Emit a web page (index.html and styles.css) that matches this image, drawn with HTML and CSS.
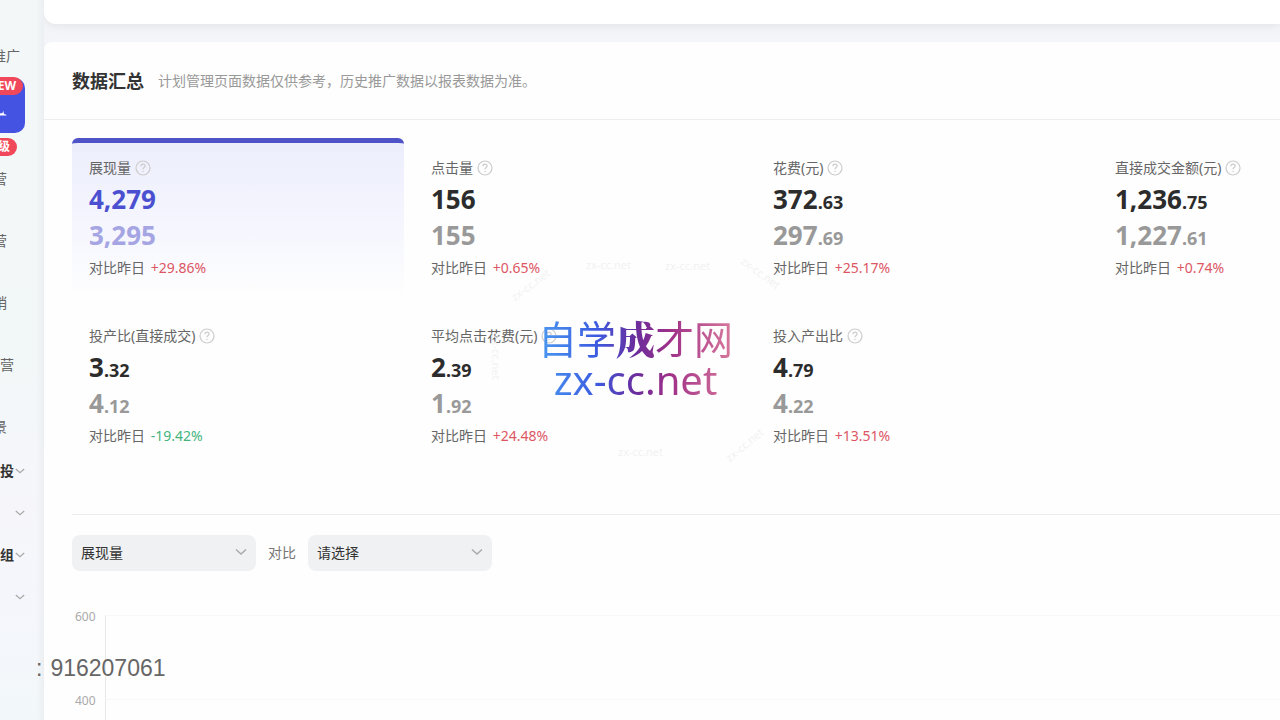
FILE: index.html
```html
<!DOCTYPE html>
<html lang="zh-CN">
<head>
<meta charset="utf-8">
<meta name="viewport" content="width=device-width, initial-scale=1">
<title>数据汇总</title>
<link rel="stylesheet" href="styles.css">
</head>
<body>
<svg class="defs" aria-hidden="true">
  <symbol id="help" viewBox="0 0 16 16"><circle cx="8" cy="8" r="7" fill="none" stroke="currentColor" stroke-width="1.2"/><path d="M5.9 6.3c0-1.3.9-2.1 2.1-2.1s2.1.8 2.1 1.9c0 1.5-2.1 1.5-2.1 3.2M8 10.7v1.2" fill="none" stroke="currentColor" stroke-width="1.2"/></symbol>
  <symbol id="chevron" viewBox="0 0 12 8"><path d="M1 1.5l5 4.5 5-4.5" fill="none" stroke="currentColor" stroke-width="1.5"/></symbol>
</svg>
<div class="app">
  <nav class="sidebar">
    <a class="item wide" href="#">推广</a>
    <a class="active" href="#" aria-label="推广"><svg class="mark" viewBox="0 0 10 8"><path d="M0 3h3l1-3 1 4 3 1v1H0z" fill="#fff"/></svg><span class="badge new">NEW</span><span class="badge up">升级</span></a>
    <div class="links">
      <a class="item" href="#">运营</a>
      <a class="item" href="#">运营</a>
      <a class="item" href="#">营销</a>
      <a class="item mid" href="#">运营</a>
      <a class="item" href="#">场景</a>
    </div>
    <div class="groups">
      <button class="group" type="button">投<svg class="chev"><use href="#chevron"/></svg></button>
      <button class="group" type="button" aria-label="展开"><svg class="chev"><use href="#chevron"/></svg></button>
      <button class="group" type="button">组<svg class="chev"><use href="#chevron"/></svg></button>
      <button class="group" type="button" aria-label="展开"><svg class="chev"><use href="#chevron"/></svg></button>
    </div>
  </nav>
  <main class="main">
    <section class="panel-top"></section>
    <section class="panel">
      <header class="head"><h1>数据汇总</h1><p>计划管理页面数据仅供参考，历史推广数据以报表数据为准。</p></header>
      <div class="metrics">
        <article class="metric selected"><h2>展现量<svg class="help"><use href="#help"/></svg></h2><p class="now">4,279</p><p class="prev">3,295</p><p class="diff">对比昨日 <span class="rise">+29.86%</span></p></article>
        <article class="metric"><h2>点击量<svg class="help"><use href="#help"/></svg></h2><p class="now">156</p><p class="prev">155</p><p class="diff">对比昨日 <span class="rise">+0.65%</span></p></article>
        <article class="metric"><h2>花费(元)<svg class="help"><use href="#help"/></svg></h2><p class="now">372<small>.63</small></p><p class="prev">297<small>.69</small></p><p class="diff">对比昨日 <span class="rise">+25.17%</span></p></article>
        <article class="metric"><h2>直接成交金额(元)<svg class="help"><use href="#help"/></svg></h2><p class="now">1,236<small>.75</small></p><p class="prev">1,227<small>.61</small></p><p class="diff">对比昨日 <span class="rise">+0.74%</span></p></article>
        <article class="metric"><h2>投产比(直接成交)<svg class="help"><use href="#help"/></svg></h2><p class="now">3<small>.32</small></p><p class="prev">4<small>.12</small></p><p class="diff">对比昨日 <span class="fall">-19.42%</span></p></article>
        <article class="metric"><h2>平均点击花费(元)<svg class="help"><use href="#help"/></svg></h2><p class="now">2<small>.39</small></p><p class="prev">1<small>.92</small></p><p class="diff">对比昨日 <span class="rise">+24.48%</span></p></article>
        <article class="metric"><h2>投入产出比<svg class="help"><use href="#help"/></svg></h2><p class="now">4<small>.79</small></p><p class="prev">4<small>.22</small></p><p class="diff">对比昨日 <span class="rise">+13.51%</span></p></article>
      </div>
      <div class="trend">
        <form class="filters">
          <span class="field"><select id="metric" aria-label="指标"><option>展现量</option></select><svg class="chev"><use href="#chevron"/></svg></span>
          <label for="compare">对比</label>
          <span class="field"><select id="compare"><option>请选择</option></select><svg class="chev"><use href="#chevron"/></svg></span>
        </form>
        <div class="chart">
          <div class="band"><span>600</span><i></i></div>
          <div class="band"><span>400</span><i></i></div>
        </div>
      </div>
    </section>
  </main>
</div>
<div class="brand"><div class="brand-name">自学<b>成</b>才网</div><div>zx-cc.net</div></div>
<div class="ghosts" aria-hidden="true">
  <span class="g1">zx-cc.net</span><span class="g2">zx-cc.net</span><span class="g3">zx-cc.net</span><span class="g4">zx-cc.net</span><span class="g5">zx-cc.net</span><span class="g6">zx-cc.net</span><span class="g7">zx-cc.net</span>
</div>
<div class="contact"><span>:</span><span>916207061</span></div>
</body>
</html>
```
FILE: styles.css
```css
* { box-sizing: border-box; }
body {
  margin: 0;
  height: 100vh;
  overflow: hidden;
  background: #f3f5f8;
  color: #333;
  font: 14px/20px "Noto Sans", "Noto Sans CJK SC", sans-serif;
}
h1, h2, p { margin: 0; }
a { color: inherit; text-decoration: none; }
.defs { position: absolute; width: 0; height: 0; }
.app { display: flex; height: 100vh; overflow: hidden; }

.sidebar {
  flex: 0 0 44px;
  overflow: hidden;
  padding-top: 46px;
  background: linear-gradient(90deg, transparent 36px, #eceff2), linear-gradient(#f3f7f8, #f2f7f8 50%, #f6f6fa 70%, #f5f6fb 82%, #f2f8fa);
}
.item {
  display: flex;
  justify-content: flex-end;
  height: 20px;
  padding-right: 37px;
  color: #666;
  white-space: nowrap;
}
.item.wide { padding-right: 24px; }
.item.mid { padding-right: 30px; }
.active {
  position: relative;
  display: flex;
  align-items: center;
  width: 25px;
  height: 55px;
  margin-top: 12px;
  padding-top: 16px;
  border-radius: 0 10px 10px 0;
  background: #4553e3;
}
.mark { width: 8px; height: 8px; }
.badge {
  position: absolute;
  height: 18px;
  padding: 0 7px;
  border-radius: 9px;
  background: #f0485a;
  color: #fff;
  font-size: 12px;
  font-weight: 700;
  line-height: 18px;
  white-space: nowrap;
}
.badge.new { top: -1px; right: 2px; }
.badge.up { top: 60px; right: 8px; }
.links {
  display: grid;
  grid-template-columns: minmax(0, 1fr);
  gap: 42px;
  padding-top: 36px;
}
.groups {
  display: grid;
  grid-template-columns: minmax(0, 1fr);
  gap: 22px;
  padding-top: 24px;
}
.group {
  display: flex;
  justify-content: flex-end;
  align-items: center;
  gap: 1px;
  height: 20px;
  padding: 0 19px 0 0;
  border: 0;
  background: none;
  color: #333;
  font: inherit;
  font-weight: 700;
}
.chev { flex: none; width: 12px; height: 8px; color: #aaa; }
.group .chev { width: 10px; }

.main { flex: 1; min-width: 0; overflow: hidden; }
.panel-top {
  height: 24px;
  border-bottom-left-radius: 12px;
  background: #fff;
  box-shadow: 0 2px 8px #e2e5e8;
}
.panel {
  margin-top: 18px;
  border-top-left-radius: 8px;
  background: #fefefe;
}
.head {
  display: flex;
  align-items: center;
  gap: 14px;
  height: 78px;
  padding: 0 28px;
  border-bottom: 1px solid #eee;
}
.head h1 { font-size: 18px; line-height: 28px; }
.head p { color: #999; }
.metrics {
  display: grid;
  grid-template-columns: repeat(4, minmax(332px, 1fr));
  gap: 10px;
  padding: 18px 0 50px 28px;
}
.metric {
  height: 158px;
  padding: 15px 17px 0;
  border-top: 5px solid transparent;
}
.selected {
  border-radius: 6px 6px 0 0;
  border-top-color: #4f53c8;
  background: linear-gradient(#eceefc, #f5f6fe 55%, #fefefe);
}
.metric h2 {
  display: flex;
  align-items: center;
  gap: 4px;
  margin-bottom: 3px;
  color: #666;
  font-size: 14px;
  font-weight: 400;
  line-height: 20px;
}
.help { width: 16px; height: 16px; color: #ccc; }
.now, .prev { height: 36px; font-size: 26px; font-weight: 700; line-height: 36px; }
.now { color: #2c2c2c; }
.prev { color: #999; }
.selected .now { color: #4b50d0; }
.selected .prev { color: #a5a5e3; }
.metric small { font-size: 18px; line-height: 18px; }
.diff { margin-top: 5px; color: #666; }
.diff span { margin-left: 2px; }
.rise { color: #dc5664; }
.fall { color: #43b57c; }

.trend { margin-left: 28px; border-top: 1px solid #ececec; }
.filters {
  display: flex;
  align-items: center;
  gap: 12px;
  padding-top: 20px;
  color: #777;
}
.field { position: relative; width: 184px; }
.field select {
  appearance: none;
  width: 100%;
  height: 36px;
  padding: 0 28px 0 9px;
  border: 0;
  border-radius: 8px;
  background: #f0f1f2;
  color: #333;
  font: inherit;
}
.field .chev { position: absolute; top: 13px; right: 9px; pointer-events: none; }
.chart { padding-top: 36px; }
.band { display: flex; height: 84px; color: #aaa; font-size: 12px; }
.band span { width: 33px; padding-left: 3px; }
.band i { flex: 1; margin-top: 8px; margin-bottom: -8px; border-top: 1px solid #f7f7f7; border-left: 1px solid #e8e8e8; }

.brand {
  position: absolute;
  top: 316px;
  left: 538px;
  background: linear-gradient(90deg, #4a9af0, #3c5be0 30%, #6a2c9c 50%, #a03088 68%, #d8799c);
  background-clip: text;
  -webkit-background-clip: text;
  color: transparent;
  font-size: 40px;
  line-height: 40px;
  text-align: center;
  white-space: nowrap;
}
.brand-name { font-size: 39px; line-height: 42px; }
.brand-name b { font-family: "Noto Serif CJK SC", "Noto Sans CJK SC", serif; font-weight: 900; }
.ghosts span { position: absolute; color: #f2f2f2; font-size: 11px; line-height: 14px; }
.ghosts .g1 { top: 258px; left: 586px; }
.ghosts .g2 { top: 259px; left: 665px; }
.ghosts .g3 { top: 278px; left: 508px; transform: rotate(-36deg); }
.ghosts .g4 { top: 266px; left: 738px; transform: rotate(36deg); }
.ghosts .g5 { top: 445px; left: 618px; }
.ghosts .g6 { top: 438px; left: 722px; transform: rotate(-40deg); }
.ghosts .g7 { top: 350px; left: 473px; transform: rotate(90deg); }
.contact {
  position: absolute;
  top: 654px;
  left: 36px;
  display: flex;
  gap: 8px;
  color: #666;
  font: 23px/28px "Liberation Sans", sans-serif;
}
```
